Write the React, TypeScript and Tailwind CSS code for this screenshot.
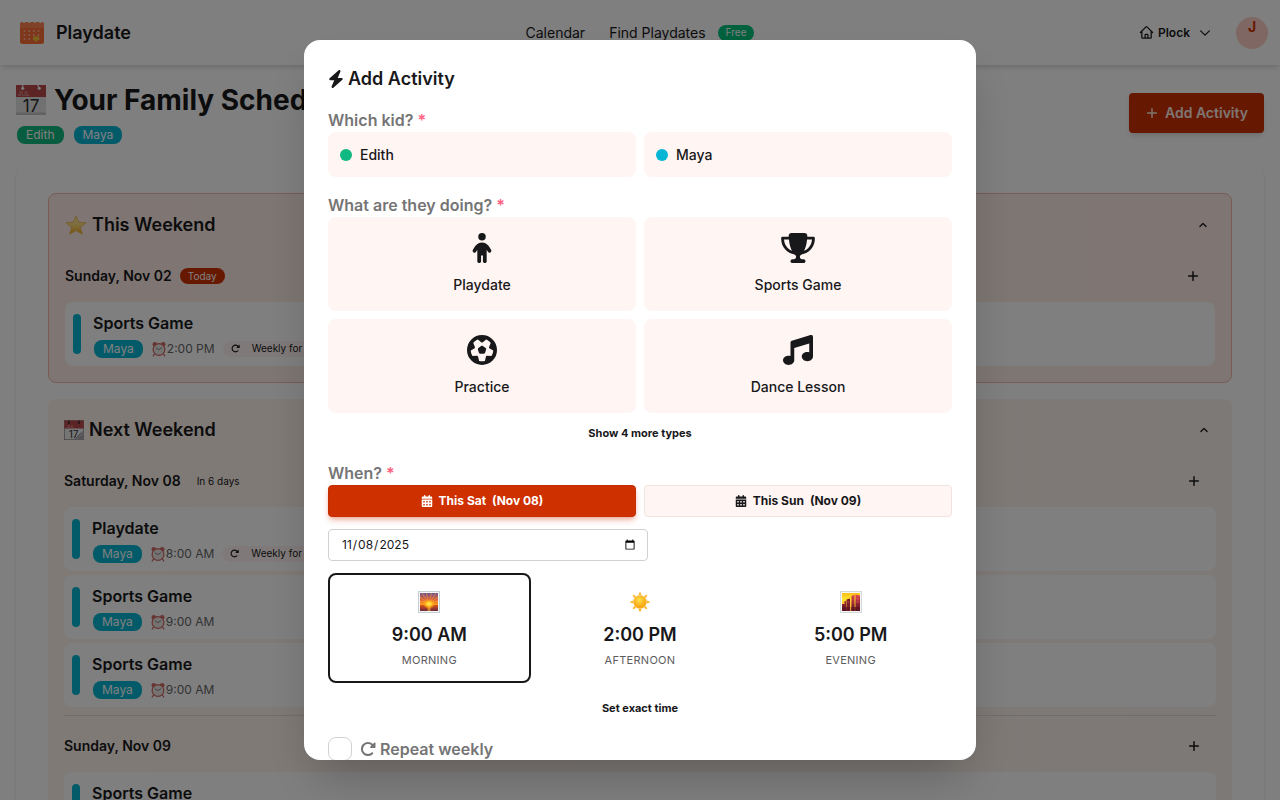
import { useState } from 'react'
import type { ReactNode } from 'react'
import {
  FaBolt,
  FaCalendarDays,
  FaChild,
  FaFutbol,
  FaMusic,
  FaRotateRight,
  FaTrophy,
} from 'react-icons/fa6'
import {
  HiOutlineChevronDown,
  HiOutlineHome,
  HiOutlinePlus,
} from 'react-icons/hi2'

type Activity = {
  title: string
  kid: string
  time: string
  repeat?: string
}

const weekendSunday: Activity[] = [
  { title: 'Sports Game', kid: 'Maya', time: '2:00 PM', repeat: 'Weekly for 8 weeks' },
]

const nextSaturday: Activity[] = [
  { title: 'Playdate', kid: 'Maya', time: '8:00 AM', repeat: 'Weekly for 8 weeks' },
  { title: 'Sports Game', kid: 'Maya', time: '9:00 AM' },
  { title: 'Sports Game', kid: 'Maya', time: '9:00 AM' },
]

const nextSunday: Activity[] = [
  { title: 'Sports Game', kid: 'Maya', time: '2:00 PM' },
]

const Logo = () => (
  <svg viewBox="0 0 24 24" className="size-6" aria-hidden="true">
    <rect x="0" y="1" width="24" height="22" rx="2.5" fill="#ff6f38" />
    <path d="M0 3.500a2.500 2.500 0 0 1 2.500-2.500h19a2.500 2.500 0 0 1 2.500 2.500V7H0Z" fill="#ff8450" />
    <g fill="#ffffff">
      <circle cx="4" cy="1" r="1.100" />
      <circle cx="9.500" cy="1" r="1.100" />
      <circle cx="15" cy="1" r="1.100" />
      <circle cx="20.500" cy="1" r="1.100" />
    </g>
    <g fill="#ffc9b0">
      {[4.5, 9.2, 13.8, 18.5].map(x =>
        [10, 14, 18].map(y => (
          <rect key={`${x}-${y}`} x={x - 0.8} y={y - 0.8} width="1.600" height="1.600" rx="0.300" />
        ))
      )}
    </g>
    <path d="M16.200 20.800c-2-1.500-3-2.600-3-4 0-2 2.200-2.300 3-.8.8-1.500 3-1.200 3 .8 0 1.400-1 2.500-3 4Z" fill="#f2c230" />
  </svg>
)

const CalendarEmoji = () => (
  <svg viewBox="0 0 30 30" className="size-[30px]" aria-hidden="true">
    <rect width="30" height="30" rx="0.800" fill="#e3e3e5" />
    <rect y="27.500" width="30" height="2.500" fill="#c4c4c6" />
    <rect width="30" height="12" fill="#b8494a" />
    <path d="M6.700 0v3M21.500 0l2 3" stroke="#e9e9e9" strokeWidth="1.200" />
    <circle cx="6.700" cy="3.300" r="1.600" fill="#f4f4f4" />
    <circle cx="23.200" cy="3.300" r="1.600" fill="#f4f4f4" />
    <text x="1.500" y="10.500" fontSize="6.500" fontWeight="400" fill="#e5b5b5" fontFamily="Inter, sans-serif">
      JUL
    </text>
    <text x="15" y="26.500" fontSize="17" fontWeight="400" textAnchor="middle" fill="#2c2c2e" fontFamily="Inter, sans-serif">
      17
    </text>
  </svg>
)

const SpiralCalendarEmoji = () => (
  <svg viewBox="0 0 20 20" className="size-5" aria-hidden="true">
    <rect x="0.300" y="0.300" width="19.400" height="19.400" fill="#ececee" stroke="#77777a" strokeWidth="0.600" />
    <rect x="0.300" y="0.500" width="19.400" height="8" fill="#b8494a" />
    <circle cx="5" cy="2.800" r="1" fill="#26262a" />
    <circle cx="15" cy="2.800" r="1" fill="#26262a" />
    <path d="M5 0v2.500M15 0v2.500" stroke="#26262a" strokeWidth="0.700" />
    <text x="2.500" y="7.800" fontSize="4" fontWeight="400" fill="#e5b5b5" fontFamily="Inter, sans-serif">
      JUL
    </text>
    <text x="9.500" y="17.500" fontSize="10" fontWeight="400" textAnchor="middle" fill="#2c2c2e" fontFamily="Inter, sans-serif">
      17
    </text>
    <path d="M19.700 12.500 12 19.700h7.700Z" fill="#a9a9ad" />
    <path d="m18.500 12-7 6.800" stroke="#4c4c50" strokeWidth="0.900" />
  </svg>
)

const StarEmoji = () => (
  <svg viewBox="0 0 22 20" className="h-5 w-[22px]" aria-hidden="true">
    <defs>
      <linearGradient id="star" x1="0" y1="0" x2="0" y2="1">
        <stop offset="0" stopColor="#fbe6a0" />
        <stop offset="0.500" stopColor="#fbdc78" />
        <stop offset="1" stopColor="#f2a71c" />
      </linearGradient>
    </defs>
    <path
      d="m11 .8 2.700 6.400 7.300.5-5.600 4.600 1.900 6.900L11 15.500l-6.300 3.700 1.900-6.900L1 7.700l7.300-.5Z"
      fill="url(#star)"
      stroke="#e7b34a"
      strokeWidth="0.800"
      strokeLinejoin="round"
    />
  </svg>
)

const AlarmEmoji = () => (
  <svg viewBox="0 0 16 16" className="size-4" aria-hidden="true">
    <circle cx="3.800" cy="3.200" r="2.300" fill="#cf6a64" />
    <circle cx="12.200" cy="3.200" r="2.300" fill="#cf6a64" />
    <path d="m3.500 13-1.300 2M12.500 13l1.300 2" stroke="#c2605a" strokeWidth="1.200" strokeLinecap="round" />
    <circle cx="8" cy="8.500" r="5.900" fill="#e9e6e4" stroke="#cf655f" strokeWidth="1.200" />
    <path d="m5 6.800 3 1.900 3-2.200" stroke="#66605e" strokeWidth="0.700" fill="none" />
  </svg>
)

const SunriseEmoji = () => (
  <svg viewBox="0 0 22 22" className="size-[22px]" aria-hidden="true">
    <defs>
      <linearGradient id="dawn" x1="0" y1="0" x2="0" y2="1">
        <stop offset="0" stopColor="#6f5590" />
        <stop offset="0.350" stopColor="#d9603c" />
        <stop offset="0.650" stopColor="#ff9d1c" />
        <stop offset="0.680" stopColor="#d8501c" />
        <stop offset="1" stopColor="#6b2a3d" />
      </linearGradient>
      <radialGradient id="dawnSun">
        <stop offset="0" stopColor="#fff46a" />
        <stop offset="0.450" stopColor="#ffc21c" />
        <stop offset="1" stopColor="#ff8a14" stopOpacity="0" />
      </radialGradient>
    </defs>
    <rect x="0.500" y="0.500" width="21" height="21" fill="#f3f5f6" stroke="#c5d0d4" />
    <rect x="2" y="2" width="18" height="18" fill="url(#dawn)" />
    <path
      d="M11 13 4 2M11 13 8.500 2M11 13 13.500 2M11 13 18 2M11 13 2 6M11 13 20 6M11 13 2 10M11 13 20 10"
      stroke="#ffad3d"
      strokeWidth="0.700"
      opacity="0.700"
    />
    <ellipse cx="11" cy="13" rx="6.500" ry="5" fill="url(#dawnSun)" />
    <path d="M9.500 14.500h3V20h-3Z" fill="#ffb52a" opacity="0.600" />
  </svg>
)

const SunEmoji = () => (
  <svg viewBox="0 0 22 22" className="size-[22px]" aria-hidden="true">
    <defs>
      <radialGradient id="sun" cx="0.450" cy="0.350">
        <stop offset="0" stopColor="#ffe14a" />
        <stop offset="1" stopColor="#f9a914" />
      </radialGradient>
    </defs>
    <g fill="#fbb62c">
      {[0, 45, 90, 135, 180, 225, 270, 315].map(angle => (
        <path key={angle} d="M9.400 4 11 .4 12.600 4Z" transform={`rotate(${angle} 11 11)`} />
      ))}
    </g>
    <circle cx="11" cy="11" r="6.400" fill="url(#sun)" stroke="#f0a21b" strokeWidth="0.500" />
  </svg>
)

const CityEmoji = () => (
  <svg viewBox="0 0 22 22" className="size-[22px]" aria-hidden="true">
    <defs>
      <linearGradient id="dusk" x1="0" y1="0" x2="0" y2="1">
        <stop offset="0" stopColor="#ffc21a" />
        <stop offset="0.350" stopColor="#ffe12e" />
        <stop offset="1" stopColor="#f58a2c" />
      </linearGradient>
      <linearGradient id="towers" x1="0" y1="0" x2="0" y2="1">
        <stop offset="0" stopColor="#e64a55" />
        <stop offset="0.550" stopColor="#8e2232" />
        <stop offset="1" stopColor="#5c1420" />
      </linearGradient>
    </defs>
    <rect x="0.500" y="0.500" width="21" height="21" fill="#f6f6f4" stroke="#d3d9da" />
    <rect x="2" y="2" width="18" height="18" fill="url(#dusk)" />
    <path d="M2 13h2.500v-3H6v10H2ZM11.500 5l3-1.500V20h-3ZM15.500 3.500l4.500 1V20h-4.500Z" fill="url(#towers)" />
    <path d="M6.500 8.500 10 7.500V20H6.500Z" fill="#7c1d2c" />
    <path d="M2 16h18v4H2Z" fill="#5c1420" opacity="0.750" />
    <path d="M10.600 13v7" stroke="#ffc63a" strokeWidth="0.800" />
    <path d="M16.500 8h2.500M16.500 11h2.500M12.500 9h1.200M12.500 12h1.200M7.500 11H9" stroke="#ee6a5e" strokeWidth="0.700" />
  </svg>
)

const kids = [
  { name: 'Edith', dot: 'bg-[#10b981]' },
  { name: 'Maya', dot: 'bg-[#06b6d4]' },
]

const activityTypes = [
  { name: 'Playdate', icon: <FaChild size={30} /> },
  { name: 'Sports Game', icon: <FaTrophy className="h-[30px] w-[34px]" /> },
  { name: 'Practice', icon: <FaFutbol size={30} /> },
  { name: 'Dance Lesson', icon: <FaMusic size={30} /> },
]

const days = [
  { name: 'This Sat', date: '(Nov 08)', value: '2025-11-08' },
  { name: 'This Sun', date: '(Nov 09)', value: '2025-11-09' },
]

const times = [
  { time: '9:00 AM', label: 'Morning', emoji: <SunriseEmoji /> },
  { time: '2:00 PM', label: 'Afternoon', emoji: <SunEmoji /> },
  { time: '5:00 PM', label: 'Evening', emoji: <CityEmoji /> },
]

const KidBadge = ({ name, color }: { name: string; color: string }) => (
  <span className={`flex h-[18px] items-center rounded-lg px-[9px] text-xs text-white ${color}`}>
    {name}
  </span>
)

const ActivityCard = ({ activity }: { activity: Activity }) => (
  <div className="flex h-16 items-center gap-3 rounded-lg bg-white px-2">
    <div className="h-10 w-2 rounded-full bg-[#06b6d4]" />
    <div className="flex flex-col gap-[5px]">
      <p className="text-base/6 font-semibold">{activity.title}</p>
      <div className="flex items-center gap-2 pl-px">
        <KidBadge name={activity.kid} color="bg-[#06b6d4]" />
        <span className="flex items-center text-xs text-[#666666]">
          <AlarmEmoji />
          {activity.time}
        </span>
        {activity.repeat && (
          <span className="flex h-4 items-center gap-3 rounded-full bg-[#fff5f2] px-2 text-[10px]">
            <FaRotateRight size={9} />
            {activity.repeat}
          </span>
        )}
      </div>
    </div>
  </div>
)

const DaySection = ({
  title,
  badge,
  activities,
}: {
  title: string
  badge?: ReactNode
  activities: Activity[]
}) => (
  <div className="flex flex-col gap-[10px]">
    <div className="flex h-8 items-center justify-between">
      <div className="flex items-center gap-2">
        <h3 className="text-sm font-semibold">{title}</h3>
        {badge}
      </div>
      <button type="button" aria-label={`Add activity on ${title}`} className="flex h-8 w-11 items-center justify-center">
        <HiOutlinePlus size={14} strokeWidth={2.5} />
      </button>
    </div>
    <div className="flex flex-col gap-1">
      {activities.map((activity, i) => (
        <ActivityCard key={i} activity={activity} />
      ))}
    </div>
  </div>
)

const WeekendHeader = ({ emoji, title }: { emoji: ReactNode; title: string }) => (
  <div className="mb-5 flex h-[30px] items-center justify-between">
    <h2 className="flex items-center gap-[5px] text-lg font-semibold">
      {emoji}
      {title}
    </h2>
    <button type="button" aria-label={`Collapse ${title}`} className="flex size-6 items-center justify-center">
      <HiOutlineChevronDown size={10} strokeWidth={3} className="rotate-180" />
    </button>
  </div>
)

const Header = () => (
  <header className="relative grid h-[65px] grid-cols-[1fr_auto_1fr] items-center bg-white px-3 shadow-md">
    <a href="#" className="flex items-center gap-3 pl-2 text-lg font-semibold">
      <Logo />
      Playdate
    </a>
    <nav className="flex items-center gap-3 text-sm">
      <a href="#" className="mr-3">Calendar</a>
      <a href="#">Find Playdates</a>
      <span className="flex h-4 items-center rounded-full bg-[#00c27d] px-2 text-[10px] text-white">
        Free
      </span>
    </nav>
    <div className="flex items-center justify-end gap-6">
      <button type="button" className="flex items-center gap-1 text-xs font-semibold">
        <HiOutlineHome size={15} strokeWidth={2} />
        Plock
        <HiOutlineChevronDown size={14} strokeWidth={2} className="ml-1" />
      </button>
      <button
        type="button"
        aria-label="Account"
        className="flex size-8 items-start justify-center rounded-full bg-[#fed0c6] text-sm/5 font-bold text-[#cf3000]"
      >
        J
      </button>
    </div>
  </header>
)

const Schedule = () => (
  <main>
    <div className="flex items-center justify-between px-4 pt-[17px]">
      <div className="flex flex-col gap-2">
        <h1 className="flex items-center gap-2 text-[28px]/9 font-bold">
          <CalendarEmoji />
          Your Family Schedule
        </h1>
        <div className="flex items-center gap-[10px] pl-px">
          <KidBadge name="Edith" color="bg-[#10b981]" />
          <KidBadge name="Maya" color="bg-[#06b6d4]" />
        </div>
      </div>
      <button
        type="button"
        className="flex h-10 items-center gap-[6px] rounded bg-[#cf3000] px-4 text-sm font-semibold text-[#ffebe6] shadow-md"
      >
        <HiOutlinePlus size={14} strokeWidth={2.5} />
        Add Activity
      </button>
    </div>
    <div className="mx-4 mt-[17px] flex flex-col gap-4 rounded-2xl bg-white p-8 shadow-sm">
      <section className="rounded-lg border border-[#f3b8a6] bg-linear-to-r from-[#ffebe6] via-[#faf0e6] to-[#ffebe6] p-4">
        <WeekendHeader emoji={<StarEmoji />} title="This Weekend" />
        <DaySection
          title="Sunday, Nov 02"
          badge={
            <span className="flex h-4 items-center rounded-full bg-[#cf3000] px-2 text-[10px] text-white">
              Today
            </span>
          }
          activities={weekendSunday}
        />
      </section>
      <section className="rounded-lg bg-linear-to-r from-[#fff4ec] to-[#fbf3ec] p-4">
        <WeekendHeader emoji={<SpiralCalendarEmoji />} title="Next Weekend" />
        <DaySection
          title="Saturday, Nov 08"
          badge={<span className="px-2 text-[10px]">In 6 days</span>}
          activities={nextSaturday}
        />
        <div className="mt-2 border-t border-[#dddddd] pt-[14px]">
          <DaySection title="Sunday, Nov 09" activities={nextSunday} />
        </div>
      </section>
    </div>
  </main>
)

const FieldLabel = ({ id, children }: { id: string; children: ReactNode }) => (
  <h3 id={id} className="text-base/6 font-semibold text-[#757575]">
    {children} <span className="text-[#ff6080]">*</span>
  </h3>
)

const AddActivityDialog = () => {
  const [kid, setKid] = useState('')
  const [activityType, setActivityType] = useState('')
  const [date, setDate] = useState('2025-11-08')
  const [time, setTime] = useState('9:00 AM')

  return (
    <div className="fixed inset-0 flex items-center justify-center bg-black/50">
      <div
        role="dialog"
        aria-modal="true"
        aria-labelledby="dialog-title"
        className="max-h-[90vh] w-full max-w-2xl overflow-y-auto rounded-2xl bg-white p-6 shadow-2xl [scrollbar-width:none]"
      >
        <h2 id="dialog-title" className="mb-[14px] flex h-[30px] items-center gap-1 text-lg font-semibold">
          <FaBolt className="h-[18px] w-4" />
          Add Activity
        </h2>

        <FieldLabel id="kid-label">Which kid?</FieldLabel>
        <div role="group" aria-labelledby="kid-label" className="mb-4 grid grid-cols-2 gap-2">
          {kids.map(({ name, dot }) => (
            <button
              key={name}
              type="button"
              aria-pressed={kid === name}
              onClick={() => setKid(name)}
              className="flex h-[45px] items-center gap-2 rounded-lg bg-[#fff5f2] px-3 text-sm font-medium"
            >
              <span className={`size-3 rounded-full ${dot}`} />
              {name}
            </button>
          ))}
        </div>

        <FieldLabel id="type-label">What are they doing?</FieldLabel>
        <div role="group" aria-labelledby="type-label" className="grid grid-cols-2 gap-2">
          {activityTypes.map(({ name, icon }) => (
            <button
              key={name}
              type="button"
              aria-pressed={activityType === name}
              onClick={() => setActivityType(name)}
              className="flex h-[94px] flex-col items-center justify-center gap-3 rounded-lg bg-[#fff5f2] text-sm font-medium"
            >
              {icon}
              {name}
            </button>
          ))}
        </div>
        <button type="button" className="mx-auto mt-2 mb-4 flex h-6 items-center text-[11px] font-bold">
          Show 4 more types
        </button>

        <FieldLabel id="when-label">When?</FieldLabel>
        <div role="group" aria-labelledby="when-label" className="grid grid-cols-2 gap-2">
          {days.map(day => (
            <button
              key={day.value}
              type="button"
              aria-pressed={date === day.value}
              onClick={() => setDate(day.value)}
              className={
                date === day.value
                  ? 'flex h-8 items-center justify-center gap-[6px] rounded border border-[#c42e00] bg-[#cf3000] text-xs font-bold text-white shadow-md shadow-[#cf3000]/30'
                  : 'flex h-8 items-center justify-center gap-[6px] rounded border border-[#f2e3df] bg-[#fff5f2] text-xs font-bold'
              }
            >
              <FaCalendarDays size={12} />
              {day.name}
              <span>{day.date}</span>
            </button>
          ))}
        </div>
        <input
          type="date"
          aria-label="Date"
          value={date}
          onChange={e => setDate(e.target.value)}
          className="mt-3 block h-8 w-80 rounded border border-[#d1d1d1] pr-[9px] pl-3 text-xs"
        />
        <div role="group" aria-label="Time" className="mt-3 grid grid-cols-3 gap-2">
          {times.map(slot => (
            <button
              key={slot.time}
              type="button"
              aria-pressed={time === slot.time}
              onClick={() => setTime(slot.time)}
              className={
                time === slot.time
                  ? 'flex h-[110px] flex-col items-center justify-center rounded-lg border-2 border-[#18181b] pt-[2px]'
                  : 'flex h-[110px] flex-col items-center justify-center rounded-lg border-2 border-transparent pt-[2px]'
              }
            >
              {slot.emoji}
              <span className="mt-2 text-lg/7 font-semibold">{slot.time}</span>
              <span className="mt-[3px] text-[11px]/4 tracking-wide text-[#5c5c5e] uppercase">
                {slot.label}
              </span>
            </button>
          ))}
        </div>
        <button type="button" className="mx-auto mt-[13px] flex h-6 items-center text-[11px] font-bold">
          Set exact time
        </button>
        <label className="mt-[17px] flex items-center gap-2 font-semibold text-[#757575]">
          <input
            type="checkbox"
            className="size-6 appearance-none rounded-lg border border-[#d1d1d1] checked:bg-[#cf3000]"
          />
          <span className="flex items-center gap-1">
            <FaRotateRight size={16} />
            Repeat weekly
          </span>
        </label>
      </div>
    </div>
  )
}

export default function App() {
  return (
    <div className="h-screen overflow-hidden bg-white font-[Inter,sans-serif] text-[#18181b]">
      <Header />
      <Schedule />
      <AddActivityDialog />
    </div>
  )
}
